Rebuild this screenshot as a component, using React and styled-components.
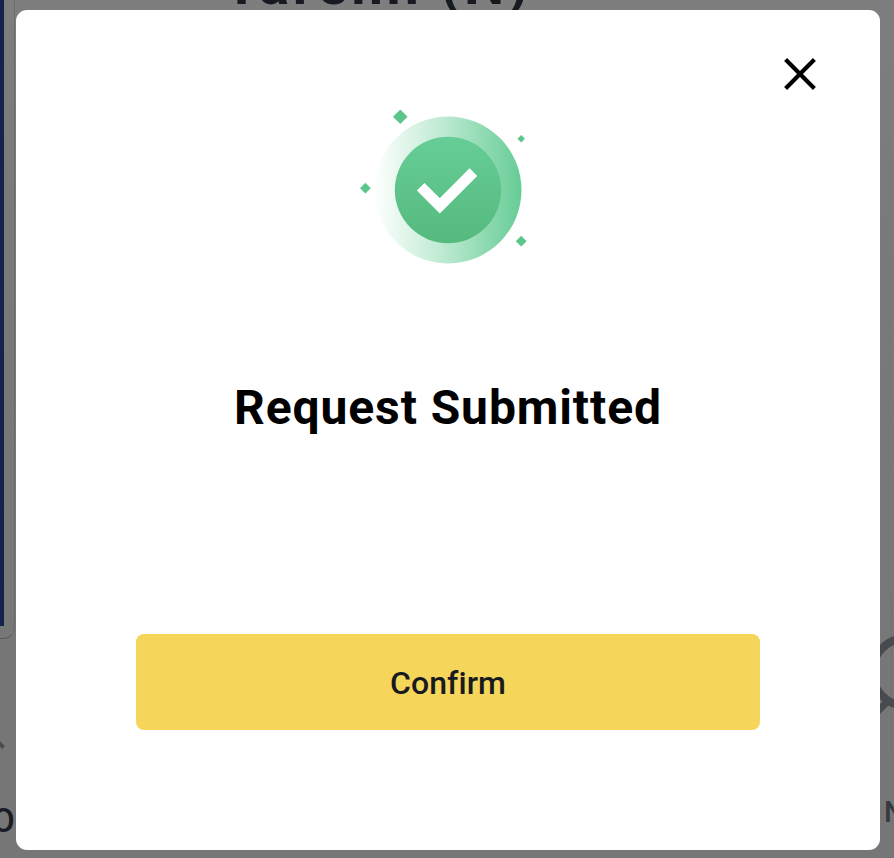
import React from 'react';
import styled, { createGlobalStyle } from 'styled-components';

const GlobalStyle = createGlobalStyle`
  * { box-sizing: border-box; }
  body {
    margin: 0;
    overflow: hidden;
    background: #777777;
    font-family: Roboto, "Liberation Sans", sans-serif;
  }
`;

const Page = styled.main`
  display: grid;
  grid-template: 858px / 894px;
`;

const Backdrop = styled.div`
  grid-area: 1 / 1;
  display: grid;
  grid-template-columns: 16px 864px 14px;
  height: 858px;
  overflow: hidden;
  background: linear-gradient(#7e7e7e, #797979 30%, #767676);
`;

const SideColumn = styled.div`
  display: flex;
  flex-direction: column;
  overflow: hidden;
`;

const ImageCard = styled.div`
  width: 15px;
  height: 639px;
  flex: none;
  padding-bottom: 12px;
  border-right: 1px solid #6b6b6b;
  border-bottom: 1px solid #555862;
  border-bottom-right-radius: 12px;
`;

const CardImage = styled.div`
  width: 4px;
  height: 100%;
  background: #14234d;
`;

const LeftArrow = styled.svg`
  width: 16px;
  height: 16px;
  margin-top: 97px;
  flex: none;
`;

const SideLabel = styled.span`
  flex: none;
  white-space: nowrap;
  font-size: ${(p) => p.$size}px;
  line-height: 40px;
  font-weight: 500;
  color: ${(p) => p.$color};
  margin: ${(p) => p.$margin};
`;

const PageTitle = styled.h1`
  margin: -43px 0 0 208px;
  height: 56px;
  font-size: 57px;
  line-height: 56px;
  font-weight: 700;
  letter-spacing: 3.6px;
  white-space: nowrap;
  color: #171a21;
`;

const SearchIcon = styled.svg`
  width: 14px;
  height: 160px;
  margin-top: 595px;
  flex: none;
`;

const Dialog = styled.section`
  grid-area: 1 / 1;
  z-index: 1;
  width: 864px;
  height: 840px;
  margin: 10px 0 0 16px;
  padding: 40px 56px 0;
  display: flex;
  flex-direction: column;
  align-items: center;
  border-radius: 11px;
  background: #fff;
`;

const CloseButton = styled.button`
  align-self: flex-end;
  display: flex;
  width: 48px;
  height: 48px;
  padding: 0;
  border: 0;
  background: none;
`;

const SuccessArt = styled.svg`
  display: block;
  width: 192px;
  height: 192px;
  margin-top: -5px;
  flex: none;
`;

const Heading = styled.h2`
  margin: 91px 0 0;
  font-size: 48px;
  line-height: 64px;
  font-weight: 700;
  letter-spacing: 0.9px;
  color: #000;
  white-space: nowrap;
`;

const ConfirmButton = styled.button`
  width: 624px;
  height: 96px;
  margin-top: 194px;
  padding: 1px 0 0;
  border: 0;
  border-radius: 8px;
  background: #f6d55b;
  color: #181a20;
  font: 500 32px/48px Roboto, "Liberation Sans", sans-serif;
  letter-spacing: 0.1px;
`;

/* Diamonds are [centre x, centre y, half diagonal]. */
const DIAMONDS = [
  [400.3, 116.7, 7.3],
  [521.2, 138.7, 3.7],
  [365.4, 188.2, 5.4],
  [521.2, 241.2, 5.4],
];

function SuccessIllustration() {
  return (
    <SuccessArt viewBox="352 93 192 192" aria-hidden="true">
      <defs>
        <linearGradient id="halo" x1="0" y1="0" x2="1" y2="0">
          <stop offset="0" stopColor="#fff" />
          <stop offset="0.5" stopColor="#b8e8ce" />
          <stop offset="1" stopColor="#66cc96" />
        </linearGradient>
        <linearGradient id="disc" x1="0" y1="0" x2="0" y2="1">
          <stop offset="0" stopColor="#66cd97" />
          <stop offset="1" stopColor="#55ba7e" />
        </linearGradient>
      </defs>
      <circle cx="448" cy="190" r="73.5" fill="url(#halo)" />
      <circle cx="448" cy="190" r="53.2" fill="url(#disc)" />
      <path d="M420.7 186.7 439.8 205.8 473.4 172.1" fill="none" stroke="#fff" strokeWidth="10.8" />
      {DIAMONDS.map(([x, y, r]) => (
        <path key={`${x}-${y}`} d={`M${x} ${y - r}l${r} ${r}l${-r} ${r}l${-r} ${-r}z`} fill="#5bc68b" />
      ))}
    </SuccessArt>
  );
}

export default function App() {
  return (
    <>
      <GlobalStyle />
      <Page>
        <Backdrop aria-hidden="true">
          <SideColumn>
            <ImageCard><CardImage /></ImageCard>
            <LeftArrow viewBox="0 736 16 16">
              <path d="M-3 741L3.5 747.5" stroke="#4b4c4e" strokeWidth="4" fill="none" />
            </LeftArrow>
            <SideLabel $size={33} $color="#191c24" $margin="49px 0 0 -8px">O</SideLabel>
          </SideColumn>
          <PageTitle>Taremi (N)</PageTitle>
          <SideColumn>
            <SearchIcon viewBox="880 595 14 160">
              <path d="M891.5 595V752" stroke="#707070" strokeWidth="1" />
              <circle cx="906.5" cy="672" r="34" fill="none" stroke="#484a4e" strokeWidth="8" />
              <path d="M877 712L887 702" stroke="#484a4e" strokeWidth="7" />
            </SearchIcon>
            <SideLabel $size={29} $color="#35383e" $margin="37px 0 0 4px">N</SideLabel>
          </SideColumn>
        </Backdrop>
        <Dialog role="dialog" aria-modal="true" aria-labelledby="dialog-title">
          <CloseButton aria-label="Close">
            <svg width="48" height="48" viewBox="0 0 48 48">
              <path d="M9.6 9.6 38.4 38.4M38.4 9.6 9.6 38.4" stroke="#000" strokeWidth="4.2" />
            </svg>
          </CloseButton>
          <SuccessIllustration />
          <Heading id="dialog-title">Request Submitted</Heading>
          <ConfirmButton>Confirm</ConfirmButton>
        </Dialog>
      </Page>
    </>
  );
}
